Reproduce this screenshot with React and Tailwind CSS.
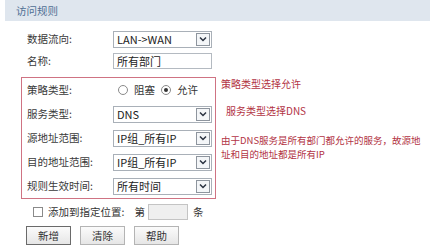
import React from "react";

const Arrow = () => (
  <span className="flex items-center justify-center w-[14px] h-[13px] border border-[#8e959e] bg-[#f4f6f8] mr-[1px]">
    <svg width="8" height="6" viewBox="0 0 8 6">
      <path d="M1 1.5 L4 4.5 L7 1.5" fill="none" stroke="#2b3340" strokeWidth="1.5" />
    </svg>
  </span>
);

const Select = ({ value }) => (
  <div className="flex items-center justify-between w-[99px] h-[17px] border border-[#a9b0b8] bg-white pl-[3px]">
    <span className="text-[11px] leading-none text-[#222]">{value}</span>
    <Arrow />
  </div>
);

const Row = ({ label, children, h = "h-[24px]" }) => (
  <div className={`flex items-center ${h}`}>
    <span className="w-[86px] text-[10.5px] text-[#3a3a3a]">{label}</span>
    {children}
  </div>
);

const Radio = ({ checked }) => (
  <span className="flex items-center justify-center w-[10px] h-[10px] rounded-full border border-[#8a8a8a] bg-white">
    {checked && <span className="w-[4px] h-[4px] rounded-full bg-[#333]" />}
  </span>
);

const Button = ({ children, active }) => (
  <button
    className={`w-[45px] h-[19px] text-[10.5px] text-[#333] bg-gradient-to-b from-[#fbfbfb] to-[#e6e6e6] border ${
      active ? "border-[#6a6a6a]" : "border-[#b4b4b4]"
    }`}
  >
    {children}
  </button>
);

export default function App() {
  return (
    <div
      className="w-[430px] h-[248px] bg-white overflow-hidden"
      style={{ fontFamily: '"Noto Sans CJK SC", "Noto Sans", sans-serif' }}
    >
      <div className="ml-[5px] h-[21px] bg-[#dfe6ee] flex items-center pl-[11px]">
        <span className="text-[10.5px] text-[#4f6f94]">访问规则</span>
      </div>

      <div className="flex">
        <div className="pl-[21px] w-[216px] shrink-0">
          <div className="pt-[7px] pl-[6px]">
            <Row label="数据流向:" h="h-[22px]">
              <Select value="LAN->WAN" />
            </Row>
            <Row label="名称:" h="h-[22px]">
              <div className="w-[99px] h-[16px] border border-[#b4bac1] bg-white pl-[3px] flex items-center">
                <span className="text-[11px] leading-none text-[#222]">所有部门</span>
              </div>
            </Row>
          </div>

          <div className="mt-[5px] border border-[#cf7383] pl-[5px]">
            <Row label="策略类型:">
              <div className="flex items-center pl-[5px] text-[10.5px] text-[#333]">
                <Radio />
                <span className="ml-[6px] mr-[6px]">阻塞</span>
                <Radio checked />
                <span className="ml-[6px]">允许</span>
              </div>
            </Row>
            <Row label="服务类型:">
              <Select value="DNS" />
            </Row>
            <Row label="源地址范围:">
              <Select value="IP组_所有IP" />
            </Row>
            <Row label="目的地址范围:">
              <Select value="IP组_所有IP" />
            </Row>
            <Row label="规则生效时间:">
              <Select value="所有时间" />
            </Row>
          </div>

          <div className="flex items-center h-[26px] pl-[12px] text-[10.5px] text-[#333]">
            <span className="w-[10px] h-[10px] border border-[#8a8a8a] bg-white" />
            <span className="ml-[5px]">添加到指定位置:</span>
            <span className="ml-[10px]">第</span>
            <span className="ml-[3px] w-[40px] h-[16px] border border-[#c4c4c4] bg-[#efefef]" />
            <span className="ml-[5px]">条</span>
          </div>

          <div className="flex items-center gap-[9px] pl-[5px] mt-[1px]">
            <Button active>新增</Button>
            <Button>清除</Button>
            <Button>帮助</Button>
          </div>
        </div>

        <div className="pl-[5px] text-[10px] text-[#b23344] whitespace-nowrap">
          <div className="mt-[57px] leading-[12px]">策略类型选择允许</div>
          <div className="mt-[15px] ml-[5px] leading-[12px]">服务类型选择DNS</div>
          <div className="mt-[16px] leading-[14px] text-[9.5px]">
            由于DNS服务是所有部门都允许的服务，故源地
            <br />
            址和目的地址都是所有IP
          </div>
        </div>
      </div>
    </div>
  );
}
